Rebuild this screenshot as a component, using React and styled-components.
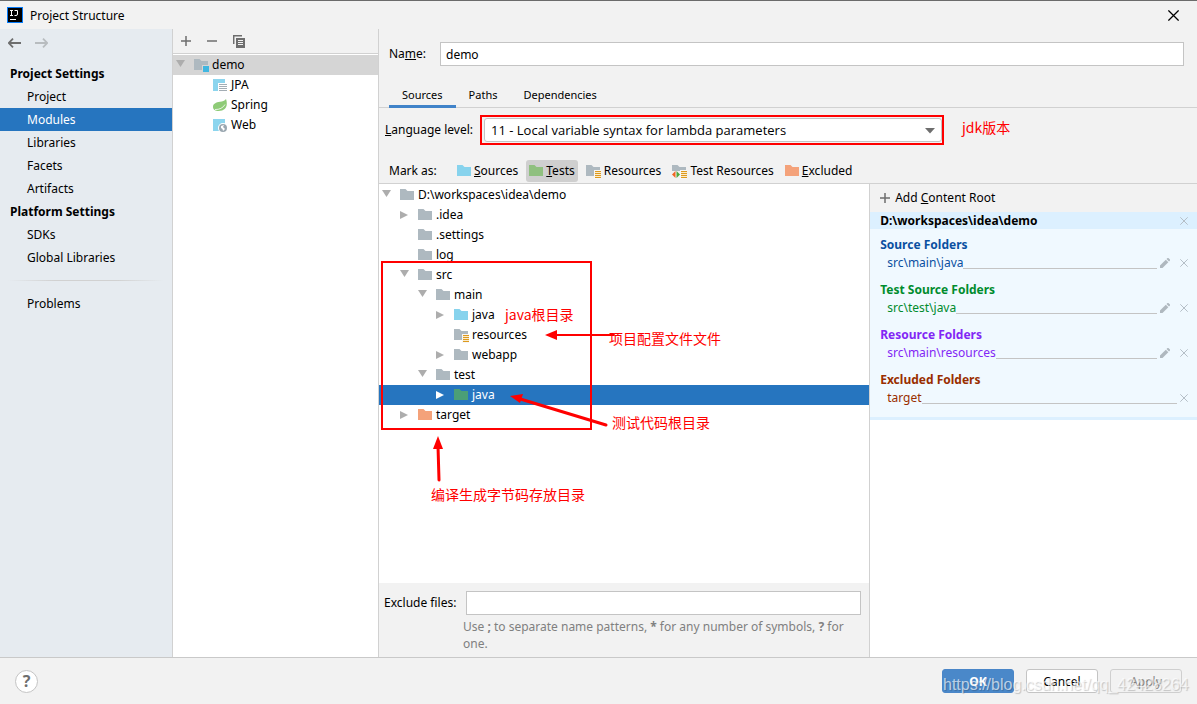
import React from 'react'
import styled, { createGlobalStyle, css } from 'styled-components'

const GlobalStyle = createGlobalStyle`
*{
    box-sizing: border-box;
}

body{
    margin: 0;
    background-color: #f2f2f2;
    color: #000;
    font-family: "Noto Sans", "Noto Sans CJK SC", sans-serif;
    font-size: 12px;
    line-height: 16px;
}

button, input, select{
    font: inherit;
    color: inherit;
}
`

const folderColors = {
    plain: '#aeb9c0',
    source: '#87d3ed',
    test: '#8fc07f',
    testSelected: '#4b9f76',
    excluded: '#f4a27a',
}

const Folder = ({ kind = 'plain', badge }) => (
    <svg width={badge ? 16 : 14} height="16" viewBox={badge ? '0 0 16 16' : '0 0 14 16'} aria-hidden="true">
        <path d="M0 2h5.5l2 2H14v9H0z" fill={folderColors[kind]} />
        {badge === 'module' && (
            <>
                <path d="M8 8h8v8H8z" fill="#d5d5d5" />
                <path d="M9 9h6v6H9z" fill="#40b6e0" />
            </>
        )}
        {(badge === 'resources' || badge === 'testResources') && (
            <>
                <path d="M8 7h7v9H8z" fill="#f7f7f7" />
                <path d="M9 8h6v7H9z" fill="#fbeccb" />
                <path d="M9 8h6v1H9zM9 10h6v1H9zM9 12h6v1H9zM9 14h6v1H9z" fill="#dd9a1f" />
            </>
        )}
        {badge === 'testResources' && (
            <>
                <path d="M0 8h8v8H0z" fill="#f2f2f2" />
                <path d="M3.5 8v7L0 11.5z" fill="#f26522" />
                <path d="M4.5 8v7L8 11.5z" fill="#4fa83d" />
            </>
        )}
    </svg>
)

const FacetIcon = ({ kind }) => {
    if (kind === 'spring') {
        return (
            <svg width="14" height="16" viewBox="0 0 14 16" aria-hidden="true">
                <path d="M13 2c-1.5 2.2-3.500 2.400-6 2.800C3 5.400 0 6.800 0 10c0 2.800 2.500 4 5.500 4 5.500 0 8.200-3 8.300-7 0-2-.200-3.500-.800-5z" fill="#8ecb77" />
                <path d="M2 12.500c4.500.2 8-1.500 10-5" stroke="#fff" strokeWidth=".800" fill="none" />
            </svg>
        )
    }
    return (
        <svg width="14" height="16" viewBox="0 0 14 16" aria-hidden="true">
            <path d="M0 2h12v12H0z" fill="#8cd5ee" />
            {kind === 'jpa' ? (
                <>
                    <path d="M5 6h9v9H5z" fill="#fff" />
                    <path d="M6 7.500h8M6 9.500h8M6 11.500h8M6 13.500h8" stroke="#a3adb4" />
                </>
            ) : (
                <>
                    <circle cx="10" cy="11" r="5" fill="#fff" />
                    <circle cx="10" cy="11" r="4" fill="#9aa7b0" />
                    <path d="M8 9l3-1-1 2 2 2-2 2-.500-2L8 11z" fill="#fff" />
                </>
            )}
        </svg>
    )
}

const Toggle = ({ open, selected }) => (
    <svg width="18" height="16" viewBox="0 0 18 16" aria-hidden="true">
        <path d={open ? 'M0 3h9l-4.500 7z' : 'M0 4l8 4-8 4z'} fill={selected ? '#fff' : '#adadad'} />
    </svg>
)

const PlusIcon = () => (
    <svg width="10" height="10" viewBox="0 0 10 10" aria-hidden="true">
        <path d="M0 5h10M5 0v10" stroke="#6e6e6e" strokeWidth="1.500" />
    </svg>
)

const MinusIcon = () => (
    <svg width="10" height="10" viewBox="0 0 10 10" aria-hidden="true">
        <path d="M0 5h10" stroke="#6e6e6e" strokeWidth="1.500" />
    </svg>
)

const CopyIcon = () => (
    <svg width="12" height="13" viewBox="0 0 12 13" aria-hidden="true">
        <path d="M.700 9V.700H9" stroke="#6e6e6e" strokeWidth="1.500" fill="none" />
        <path d="M3 3h9v10H3z" fill="#6e6e6e" />
        <path d="M5 5.500h5M5 7.500h5M5 9.500h5" stroke="#f2f2f2" />
    </svg>
)

const ArrowIcon = ({ right }) => (
    <svg width="13" height="10" viewBox="0 0 13 10" fill="none" strokeWidth="1.800" aria-hidden="true">
        {right
            ? <path d="M0 5h12M8 .700L12.300 5 8 9.300" stroke="#b8bcbf" />
            : <path d="M13 5H1M5 .700L.700 5 5 9.300" stroke="#6e6e6e" />}
    </svg>
)

const CrossIcon = ({ size = 8, color = '#b5bfc7' }) => (
    <svg width={size} height={size} viewBox="0 0 8 8" aria-hidden="true">
        <path d="M.300 .300l7.400 7.400M7.700 .300L.300 7.700" stroke={color} strokeWidth={size > 8 ? 0.9 : 1} />
    </svg>
)

const PencilIcon = () => (
    <svg width="10" height="10" viewBox="0 0 10 10" fill="#afb8bf" aria-hidden="true">
        <path d="M0 10v-2.500l5.800-5.800 2.500 2.500L2.500 10z" />
        <path d="M6.500 1l1-1h.900L10 1.600v.900l-1 1z" />
    </svg>
)

const Logo = () => (
    <svg width="16" height="16" viewBox="0 0 16 16" aria-hidden="true">
        <path d="M0 0h16v16H0z" fill="#087cfa" />
        <path d="M1 1h14v14H1z" fill="#000" />
        <path d="M3 3.500h3M4.500 3.500v5M3 8.500h3M7.500 3.500h3v3.500q0 1.500-1.500 1.500h-1.500M3 12.500h6" stroke="#fff" fill="none" />
    </svg>
)

const settings = [
    { title: 'Project Settings', items: ['Project', 'Modules', 'Libraries', 'Facets', 'Artifacts'] },
    { title: 'Platform Settings', items: ['SDKs', 'Global Libraries'] },
]

const facets = [
    { kind: 'jpa', name: 'JPA' },
    { kind: 'spring', name: 'Spring' },
    { kind: 'web', name: 'Web' },
]

const marks = [
    { key: 'S', rest: 'ources', kind: 'source' },
    { key: 'T', rest: 'ests', kind: 'test', active: true },
    { rest: 'Resources', badge: 'resources' },
    { rest: 'Test Resources', badge: 'testResources' },
    { key: 'E', rest: 'xcluded', kind: 'excluded' },
]

const tree = [
    { name: 'D:\\workspaces\\idea\\demo', level: 0, toggle: 'open' },
    { name: '.idea', level: 1, toggle: 'closed' },
    { name: '.settings', level: 1 },
    { name: 'log', level: 1 },
    { name: 'src', level: 1, toggle: 'open' },
    { name: 'main', level: 2, toggle: 'open' },
    { name: 'java', level: 3, toggle: 'closed', kind: 'source' },
    { name: 'resources', level: 3, badge: 'resources' },
    { name: 'webapp', level: 3, toggle: 'closed' },
    { name: 'test', level: 2, toggle: 'open' },
    { name: 'java', level: 3, toggle: 'closed', kind: 'testSelected', selected: true },
    { name: 'target', level: 1, toggle: 'closed', kind: 'excluded' },
]

const roots = [
    { title: 'Source Folders', path: 'src\\main\\java', color: '#0a50a1', editable: true },
    { title: 'Test Source Folders', path: 'src\\test\\java', color: '#008c2e', editable: true },
    { title: 'Resource Folders', path: 'src\\main\\resources', color: '#8227f5', editable: true },
    { title: 'Excluded Folders', path: 'target', color: '#992e00' },
]

const App = () => {
    return (
        <Window>
            <GlobalStyle />
            <TitleBar>
                <Logo />
                <Title>Project Structure</Title>
                <IconButton aria-label="Close">
                    <CrossIcon size={11} color="#000" />
                </IconButton>
            </TitleBar>

            <Body>
                <SideBar>
                    <History>
                        <IconButton aria-label="Back"><ArrowIcon /></IconButton>
                        <IconButton aria-label="Forward"><ArrowIcon right /></IconButton>
                    </History>
                    {settings.map((group) => (
                        <React.Fragment key={group.title}>
                            <NavTitle>{group.title}</NavTitle>
                            {group.items.map((item) => (
                                <NavItem href="#" key={item} $active={item === 'Modules'}>{item}</NavItem>
                            ))}
                        </React.Fragment>
                    ))}
                    <NavDivider />
                    <NavItem href="#">Problems</NavItem>
                </SideBar>

                <Modules>
                    <ModuleTools>
                        <IconButton aria-label="Add"><PlusIcon /></IconButton>
                        <IconButton aria-label="Remove"><MinusIcon /></IconButton>
                        <IconButton aria-label="Copy"><CopyIcon /></IconButton>
                    </ModuleTools>
                    <ModuleList>
                        <ModuleRow $active>
                            <Toggle open />
                            <Folder badge="module" />
                            <Label $tight>demo</Label>
                        </ModuleRow>
                        {facets.map((facet) => (
                            <ModuleRow key={facet.name} $nested>
                                <FacetIcon kind={facet.kind} />
                                <Label>{facet.name}</Label>
                            </ModuleRow>
                        ))}
                    </ModuleList>
                </Modules>

                <Editor>
                    <NameRow>
                        <NameLabel htmlFor="name">Na<u>m</u>e:</NameLabel>
                        <TextInput id="name" defaultValue="demo" />
                    </NameRow>
                    <Tabs>
                        <Tab $active>Sources</Tab>
                        <Tab>Paths</Tab>
                        <Tab>Dependencies</Tab>
                    </Tabs>
                    <LevelRow>
                        <LevelLabel htmlFor="level"><u>L</u>anguage level:</LevelLabel>
                        <SelectFrame>
                            <Select id="level">
                                <option>11 - Local variable syntax for lambda parameters</option>
                            </Select>
                            <SelectArrow width="10" height="6" viewBox="0 0 10 6" aria-hidden="true">
                                <path d="M0 0h10L5 5.500z" fill="#6e6e6e" />
                            </SelectArrow>
                        </SelectFrame>
                        <LevelNote>jdk版本</LevelNote>
                    </LevelRow>
                    <MarkRow>
                        <MarkLabel>Mark as:</MarkLabel>
                        {marks.map((mark) => (
                            <MarkButton key={mark.rest} $active={mark.active}>
                                <Folder kind={mark.kind} badge={mark.badge} />
                                <MarkText $tight={mark.badge}>{mark.key && <u>{mark.key}</u>}{mark.rest}</MarkText>
                            </MarkButton>
                        ))}
                    </MarkRow>

                    <Content>
                        <TreePane>
                            <Tree>
                                {tree.map((node, i) => (
                                    <TreeRow key={i} $level={node.level} $selected={node.selected}>
                                        {node.toggle
                                            ? <Toggle open={node.toggle === 'open'} selected={node.selected} />
                                            : <ToggleGap />}
                                        <Folder kind={node.kind} badge={node.badge} />
                                        <Label $tight={node.badge}>{node.name}</Label>
                                    </TreeRow>
                                ))}
                                <Highlight />
                                <Arrows width="240" height="310" viewBox="0 0 240 310" aria-hidden="true">
                                    <path d="M235 151H175" strokeWidth="2" />
                                    <path d="M166 151l12-5v10z" />
                                    <path d="M227 241L138 214" strokeWidth="3" />
                                    <path d="M131 212l13-2-3 9z" />
                                    <path d="M60 296L59 262" strokeWidth="3" />
                                    <path d="M59 252l5 13H54z" />
                                </Arrows>
                                <Note $x={126} $y={121}>java根目录</Note>
                                <Note $x={230} $y={145}>项目配置文件文件</Note>
                                <Note $x={233} $y={229}>测试代码根目录</Note>
                                <Note $x={52} $y={301}>编译生成字节码存放目录</Note>
                            </Tree>
                            <Exclude>
                                <ExcludeLabel htmlFor="exclude">Exclude files:</ExcludeLabel>
                                <TextInput id="exclude" />
                                <Hint>
                                    Use <b>;</b> to separate name patterns, <b>*</b> for any number of symbols, <b>?</b> for one.
                                </Hint>
                            </Exclude>
                        </TreePane>

                        <RootPane>
                            <AddRoot>
                                <PlusIcon />
                                <span>Add <u>C</u>ontent Root</span>
                            </AddRoot>
                            <RootTitle>
                                D:\workspaces\idea\demo
                                <IconButton aria-label="Remove content root"><CrossIcon /></IconButton>
                            </RootTitle>
                            <RootBody>
                                {roots.map((root) => (
                                    <RootGroup key={root.title} $color={root.color}>
                                        <GroupTitle>{root.title}</GroupTitle>
                                        <PathRow>
                                            {root.path}
                                            <Rule />
                                            {root.editable && <IconButton aria-label="Edit"><PencilIcon /></IconButton>}
                                            <RemoveButton aria-label="Remove" $spaced={root.editable}><CrossIcon /></RemoveButton>
                                        </PathRow>
                                    </RootGroup>
                                ))}
                            </RootBody>
                        </RootPane>
                    </Content>
                </Editor>
            </Body>

            <Footer>
                <HelpButton aria-label="Help">?</HelpButton>
                <Actions>
                    <Button $variant="primary">OK</Button>
                    <Button>Cancel</Button>
                    <Button disabled>Apply</Button>
                    <Watermark>https://blog.csdn.net/qq_42428264</Watermark>
                </Actions>
            </Footer>
        </Window>
    )
}

export default App



const Window = styled.div`
display: flex;
flex-direction: column;
min-height: 100vh;
border-top: 1px solid #6b6b6b;
`

const TitleBar = styled.header`
display: flex;
align-items: center;
height: 28px;
padding: 0 18px 0 7px;
`

const Title = styled.h1`
flex: 1;
margin: 0 0 0 7px;
padding-top: 2px;
font-size: 12px;
font-weight: 400;
`

const IconButton = styled.button`
display: flex;
padding: 0;
border: none;
background: none;
`

const Body = styled.div`
flex: 1;
display: flex;
`

const SideBar = styled.nav`
width: 173px;
background-color: #e6ebf0;
border-right: 1px solid #d1d1d1;
`

const History = styled.div`
display: flex;
align-items: center;
gap: 14px;
height: 28px;
margin-bottom: 5px;
padding-left: 8px;
`

const NavTitle = styled.h2`
height: 23px;
margin: 0;
padding-left: 10px;
font-size: 12px;
font-weight: 700;
line-height: 24px;
`

const NavItem = styled.a`
display: block;
height: 23px;
padding-left: 27px;
line-height: 23px;
text-decoration: none;
color: ${({ $active }) => ($active ? '#fff' : '#000')};
background-color: ${({ $active }) => ($active ? '#2675bf' : 'transparent')};
`

const NavDivider = styled.div`
height: 1px;
margin: 11px 8px;
background: linear-gradient(to right, transparent, #d1d1d1 30%, #d1d1d1 70%, transparent);
`

const Modules = styled.section`
display: flex;
flex-direction: column;
width: 206px;
border-right: 1px solid #d1d1d1;
`

const ModuleTools = styled.div`
display: flex;
align-items: center;
gap: 16px;
height: 25px;
padding-left: 8px;
border-bottom: 1px solid #d1d1d1;
`

const ModuleList = styled.div`
flex: 1;
padding-top: 1px;
background-color: #fff;
`

const ModuleRow = styled.div`
display: flex;
align-items: center;
height: 20px;
padding-left: ${({ $nested }) => ($nested ? 40 : 3)}px;
background-color: ${({ $active }) => ($active ? '#d5d5d5' : 'transparent')};
`

const Label = styled.span`
margin-left: ${({ $tight }) => ($tight ? 2 : 4)}px;
`

const Editor = styled.main`
flex: 1;
display: flex;
flex-direction: column;
min-width: 0;
`

const NameRow = styled.div`
display: flex;
align-items: center;
padding: 13px 13px 0 10px;
`

const NameLabel = styled.label`
width: 51px;
`

const TextInput = styled.input`
flex: 1;
min-width: 0;
height: 24px;
padding: 0 5px;
border: 1px solid #c4c4c4;
background-color: #fff;
`

const Tabs = styled.div`
display: flex;
height: 42px;
padding: 15px 0 0 10px;
border-bottom: 1px solid #d1d1d1;
`

const Tab = styled.button`
height: 27px;
padding: 3px 13px 0;
border: none;
border-bottom: 3px solid ${({ $active }) => ($active ? '#4083c9' : 'transparent')};
background: none;
font-size: 11px;
`

const LevelRow = styled.div`
display: flex;
align-items: center;
padding: 7px 6px 0;
`

const LevelLabel = styled.label`
width: 95px;
`

const SelectFrame = styled.div`
position: relative;
width: 464px;
padding: 1px 0 1px 2px;
border: 2px solid #f00;
`

const Select = styled.select`
display: block;
width: 100%;
height: 24px;
padding: 0 6px;
border: 1px solid #c4c4c4;
border-radius: 3px;
background-color: #fff;
font-family: "Open Sans", sans-serif;
font-size: 13px;
appearance: none;
`

const SelectArrow = styled.svg`
position: absolute;
top: 11px;
right: 7px;
`

const noteText = css`
color: #f00;
font-family: "Noto Sans CJK SC", sans-serif;
font-size: 14px;
line-height: 18px;
white-space: nowrap;
`

const LevelNote = styled.span`
${noteText}
align-self: flex-start;
margin: 3px 0 0 18px;
`

const MarkRow = styled.div`
display: flex;
align-items: center;
gap: 5px;
height: 39px;
padding: 14px 0 0 10px;
border-bottom: 1px solid #d1d1d1;
`

const MarkLabel = styled.span`
width: 60px;
`

const MarkButton = styled.button`
display: flex;
align-items: center;
height: 22px;
padding: 0 3px;
border: none;
border-radius: 3px;
background-color: ${({ $active }) => ($active ? '#cfcfcf' : 'transparent')};
white-space: nowrap;
`

const MarkText = styled.span`
margin-left: ${({ $tight }) => ($tight ? 2 : 3)}px;
`

const Content = styled.div`
flex: 1;
display: flex;
`

const TreePane = styled.div`
flex: 3;
display: flex;
flex-direction: column;
border-right: 1px solid #d1d1d1;
`

const Tree = styled.div`
position: relative;
flex: 1;
padding-top: 1px;
background-color: #fff;
`

const TreeRow = styled.div`
display: flex;
align-items: center;
height: 20px;
padding-left: ${({ $level }) => 3 + $level * 18}px;
color: ${({ $selected }) => ($selected ? '#fff' : '#000')};
background-color: ${({ $selected }) => ($selected ? '#2675bf' : 'transparent')};
`

const ToggleGap = styled.span`
width: 18px;
`

const Highlight = styled.div`
position: absolute;
top: 77px;
left: 2px;
width: 211px;
height: 169px;
border: 2px solid #f00;
`

const Arrows = styled.svg`
position: absolute;
top: 0;
left: 0;
fill: #f00;
stroke: #f00;
stroke-width: 0;
stroke-linecap: round;
`

const Note = styled.span`
${noteText}
position: absolute;
top: ${({ $y }) => $y}px;
left: ${({ $x }) => $x}px;
`

const Exclude = styled.div`
display: flex;
flex-wrap: wrap;
align-items: center;
padding: 8px 8px 5px 5px;
`

const ExcludeLabel = styled.label`
width: 82px;
`

const Hint = styled.p`
flex-basis: 100%;
margin: 3px 0 0 79px;
color: #808080;
line-height: 17px;
`

const RootPane = styled.aside`
flex: 2;
background-color: #fff;
`

const AddRoot = styled.button`
display: flex;
align-items: center;
gap: 5px;
width: 100%;
height: 28px;
padding: 0 10px;
border: none;
background-color: #f2f2f2;
`

const RootTitle = styled.div`
display: flex;
align-items: center;
justify-content: space-between;
height: 17px;
padding: 0 9px 0 10px;
background-color: #dcf0ff;
font-weight: 700;
`

const RootBody = styled.div`
display: flex;
flex-direction: column;
gap: 9px;
padding: 7px 9px 10px 10px;
border-bottom: 3px solid #dcf0ff;
background-color: #f0f9ff;
`

const RootGroup = styled.div`
color: ${({ $color }) => $color};
line-height: 18px;
`

const GroupTitle = styled.h3`
margin: 0;
font-size: 12px;
font-weight: 700;
`

const PathRow = styled.div`
display: flex;
align-items: center;
height: 18px;
padding-left: 7px;
`

const Rule = styled.div`
flex: 1;
align-self: flex-end;
height: 1px;
margin: 0 3px 3px 0;
background-color: #c4c4c4;
`

const RemoveButton = styled(IconButton)`
margin-left: ${({ $spaced }) => ($spaced ? 10 : 0)}px;
`

const Footer = styled.footer`
display: flex;
align-items: center;
justify-content: space-between;
height: 47px;
padding: 0 15px;
border-top: 1px solid #c9c9c9;
`

const HelpButton = styled.button`
width: 23px;
height: 23px;
padding: 0;
border: 1px solid #c4c4c4;
border-radius: 50%;
background-color: #fff;
color: #6e6e6e;
font-size: 16px;
font-weight: 700;
line-height: 20px;
`

const Actions = styled.div`
position: relative;
display: flex;
gap: 12px;
`

const Button = styled.button`
width: 72px;
height: 24px;
padding: 2px 0 0;
border: 1px solid #c4c4c4;
border-radius: 3px;
background-color: #fff;

${({ $variant }) => $variant === 'primary' && css`
border-color: #4a86c8;
background-color: #4a88c9;
color: #fff;
font-weight: 700;
`}

&:disabled{
    border-color: #cfcfcf;
    background-color: #f2f2f2;
    color: #8c8c8c;
}
`

const Watermark = styled.span`
position: absolute;
top: 6px;
left: 1px;
color: rgba(255, 255, 255, 0.65);
font-family: "Liberation Sans", sans-serif;
font-size: 16px;
line-height: 20px;
text-shadow: 1px 1px 1px rgba(0, 0, 0, 0.2);
white-space: nowrap;
pointer-events: none;
`
